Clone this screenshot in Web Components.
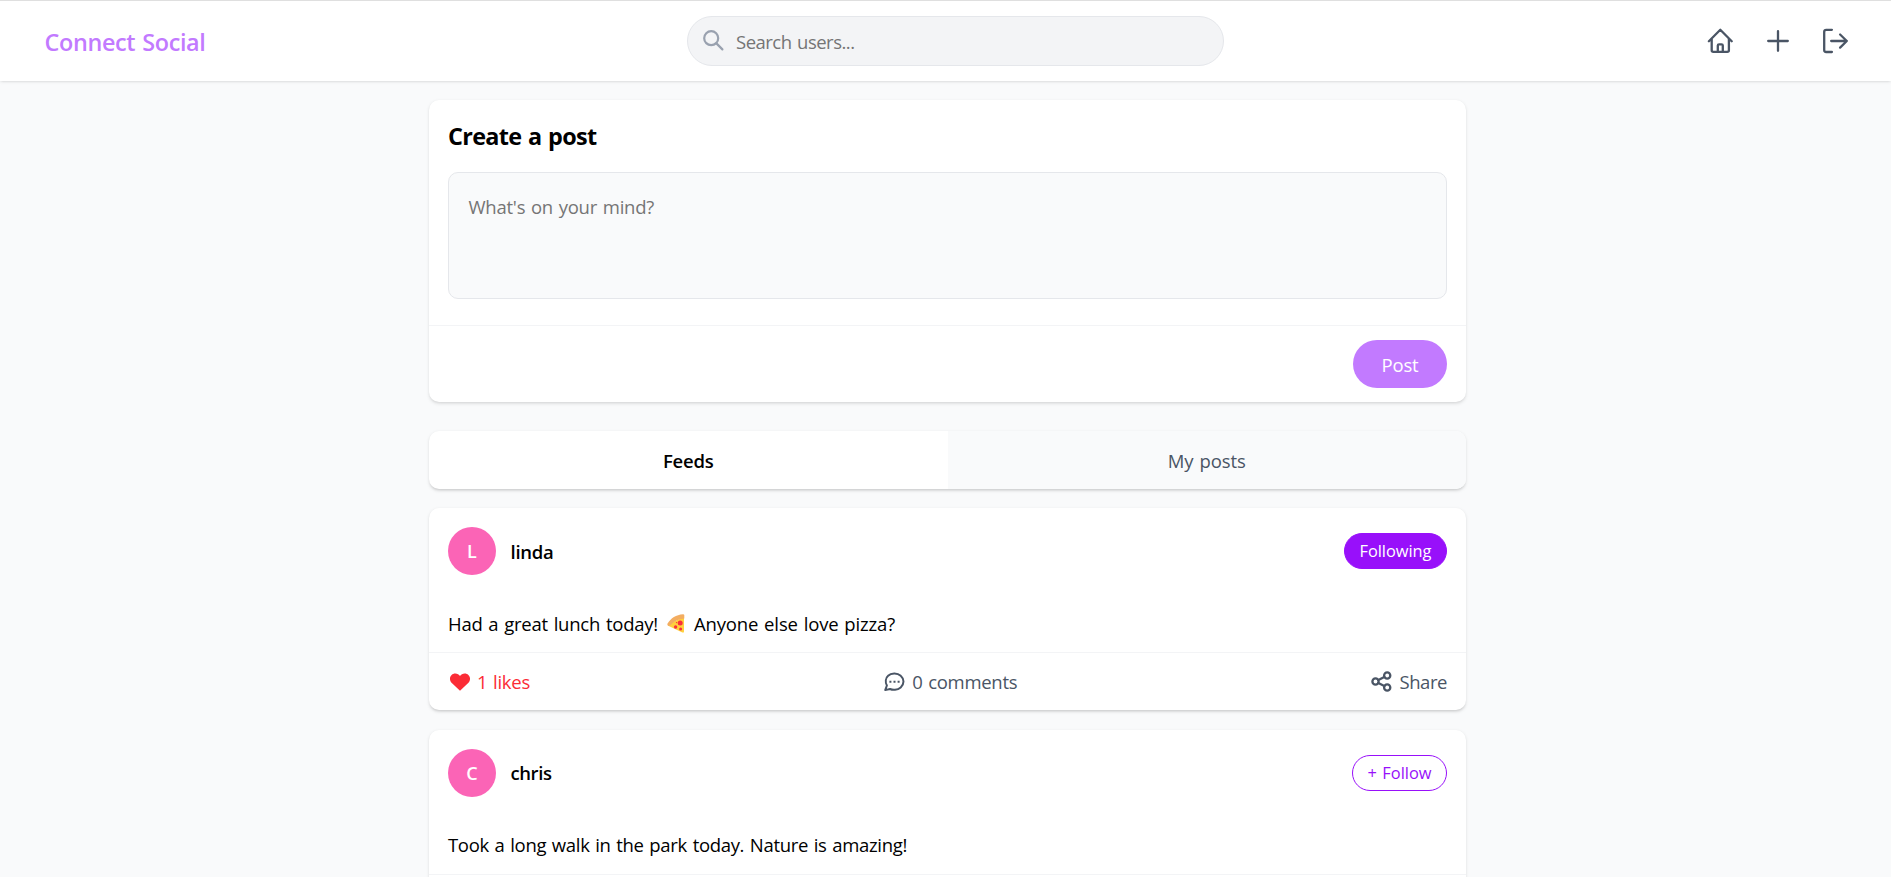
<!DOCTYPE html>
<html lang="en">
<head>
<meta charset="utf-8">
<title>Connect Social</title>
<style>
html,body{margin:0;height:877px;overflow:hidden}
body{background:#f9fafb;color:#000;font-family:"Open Sans","Noto Sans",sans-serif;font-size:18.5px;line-height:29px}
</style>
</head>
<body>
<social-app></social-app>
<script>
const define = (name, html, setup) => customElements.define(name, class extends HTMLElement {
  connectedCallback() {
    if (this.shadowRoot) return;
    const t = document.createElement('template');
    t.innerHTML = html;
    this.attachShadow({mode: 'open'}).append(t.content.cloneNode(true));
    if (setup) setup(this);
  }
});
const cardShadow = 'box-shadow:0 1.2px 3.6px rgba(0,0,0,.1),0 1.2px 2.4px -1.2px rgba(0,0,0,.1);';

const icons = {
  search: [21, 21, '<circle cx="8.2" cy="8.2" r="7"/><path d="M13.4 13.4 19.4 19.4"/>', 2.2],
  home: [26, 26, '<path d="M1.9 13.2 13.3 1.8 24.7 13.2M4.7 11V22.2Q4.7 23.8 6.3 23.8H20.3Q21.9 23.8 21.9 22.2V11M10.8 23.8V17.6Q10.8 16.3 12.1 16.3H14.5Q15.8 16.3 15.8 17.6V23.8"/>', 2.3],
  plus: [22, 22, '<path d="M11 1.2V20.8M1.2 11H20.8"/>', 2.3],
  logout: [26, 26, '<path d="M8.9 1.8H3.2Q1.2 1.8 1.2 3.8V22Q1.2 24 3.2 24H8.9M8.2 13H23.8M17.1 6.5 23.8 13 17.1 19.6"/>', 2.3],
  heart: [20, 18, '<path fill="currentColor" stroke="none" d="M10 17.8 1.8 10.1C-1.9 6.2.4.4 5.3.4 7.3.4 9 1.4 10 3 11 1.4 12.7.4 14.7.4 19.6.4 21.9 6.2 18.2 10.1Z"/>', 1],
  comment: [21, 20, '<path d="M2.9 13.5C1.1 10.2 1.5 6.2 4.1 3.8 7 .8 13.4.6 16.7 3.7 20.4 7 20.4 12.2 16.7 15.5 13.3 18.5 8.4 18.2 6 17L1.2 18.1Z"/><path stroke-width="2" stroke-linecap="butt" d="M5.4 9.8h2M9.5 9.8h2M13.6 9.8h2"/>', 2],
  share: [21, 21, '<circle cx="4.5" cy="10.5" r="3.1"/><circle cx="16.2" cy="4.5" r="3.1"/><circle cx="16.2" cy="16.5" r="3.1"/><path d="M7.4 9 13.3 5.9M7.4 12 13.3 15.1"/>', 2.3],
  pizza: [18, 19, '<g stroke="none"><path fill="#ffd03d" d="M2.6 9.4 17 3V17.4Q17 18.9 15.4 18.5L1.2 11.8Z"/><path fill="#f3ad61" d="M17.3 1V4.4C11.5 4.8 7 7 3.4 11.2 1.6 12.7 0 11.6.4 9.8 4 4 9 .8 16 .3Q17.3.3 17.3 1Z"/><g fill="#f92f3c"><circle cx="13.2" cy="9" r="2.5"/><circle cx="8.6" cy="13" r="1.7"/><circle cx="13.6" cy="14.9" r="1.5"/><circle cx="9.6" cy="8.6" r=".7"/></g></g>', 1]
};
define('ui-icon', '<style>:host{display:block;flex:none}svg{display:block}</style><svg fill="none" stroke="currentColor" stroke-linecap="round" stroke-linejoin="round"></svg>', el => {
  const [w, h, body, sw] = icons[el.getAttribute('name')];
  const s = el.shadowRoot.querySelector('svg');
  s.setAttribute('width', w); s.setAttribute('height', h);
  s.setAttribute('viewBox', `0 0 ${w} ${h}`); s.setAttribute('stroke-width', sw);
  s.innerHTML = body;
});

define('top-bar', `<style>
:host{display:grid;grid-template-columns:687px 537px 1fr;align-items:center;box-sizing:border-box;height:81px;border-top:1px solid #dfdfdf;background:#fff;${cardShadow}color:#4a5565}
.brand{padding:2px 0 0 44.5px;color:#c27aff;font-size:23.4px;font-weight:600}
.search{display:flex;box-sizing:border-box;height:50px;border:1px solid #e5e7eb;border-radius:25px;background:#f3f4f6;padding-left:15px;color:#757575}
.search ui-icon{margin-top:13px;color:#99a1af}
.search ui-label{margin:10px 0 0 12px}
nav{display:flex;align-items:center;justify-content:flex-end;padding-right:42.5px}
nav ui-icon+ui-icon{margin-left:34px}
</style>
<div class="brand"><ui-label width="161">Connect Social</ui-label></div>
<div class="search"><ui-icon name="search"></ui-icon><ui-label width="118.5">Search users...</ui-label></div>
<nav><ui-icon name="home"></ui-icon><ui-icon name="plus"></ui-icon><ui-icon name="logout"></ui-icon></nav>`);

define('post-composer', `<style>
:host{display:block;box-sizing:border-box;height:302px;background:#fff;border-radius:10px;${cardShadow}}
.top{box-sizing:border-box;height:225px;padding:22px 19px 0}
.title{height:50px;font-size:23.4px;font-weight:700}
.area{box-sizing:border-box;height:127px;border:1px solid #e5e7eb;border-radius:10px;background:#f9fafb;padding:19px 19.5px;color:#757575}
.bottom{display:flex;justify-content:flex-end;border-top:1px solid #f3f4f6;padding:14px 19px}
.post{box-sizing:border-box;width:94px;height:48px;border-radius:24px;background:#c27aff;color:#fff;text-align:center;padding-top:10px}
</style>
<div class="top"><div class="title"><ui-label width="148.5">Create a post</ui-label></div>
<div class="area"><ui-label width="185.5">What's on your mind?</ui-label></div></div>
<div class="bottom"><div class="post"><ui-label width="37">Post</ui-label></div></div>`);

define('feed-tabs', `<style>
:host{display:grid;grid-template-columns:1fr 1fr;height:58px;border-radius:10px;overflow:hidden;background:#fff;${cardShadow}text-align:center}
div{padding-top:15px}
.on{font-weight:600}
.off{background:#f9fafb;color:#4a5565}
</style>
<div class="on"><ui-label width="50.5">Feeds</ui-label></div><div class="off"><ui-label width="78">My posts</ui-label></div>`);

define('user-avatar', `<style>
:host{display:block;box-sizing:border-box;width:48px;height:48px;border-radius:50%;background:#fb64b6;color:#fff;text-align:center;font-weight:600;padding-top:10px;font-size:18px}
</style><slot></slot>`);

define('follow-button', `<style>
:host{display:block;box-sizing:border-box;height:36px;border-radius:18px;border:1px solid #9810fa;color:#9810fa;padding:2px 14.5px 0;font-size:16.4px;line-height:29px}
:host([active]){background:#9810fa;color:#fff}
</style><slot></slot>`);

define('feed-post', `<style>
:host{display:block;box-sizing:border-box;height:202px;background:#fff;border-radius:10px;${cardShadow}}
:host([preview]){height:147px;border-radius:10px 10px 0 0}
:host([preview]) .foot{padding:0;height:2px}
.head{display:flex;align-items:center;height:48px;padding:19px 19px 0}
.name{flex:1;padding:0 0 0 14.5px;font-weight:600}
:host([preview]) .name{padding-bottom:2px}
.text{display:flex;box-sizing:border-box;height:77px;padding:34px 19px 0}
.foot{display:flex;justify-content:space-between;border-top:1px solid #f3f4f6;padding:14px 19px 0;color:#4a5565}
.foot div{display:flex}
.like{color:#fb2c36}
.foot ui-label{margin-left:7px}
</style>
<div class="head"><slot name="avatar"></slot><div class="name"><slot name="name"></slot></div><slot name="action"></slot></div>
<div class="text"><slot></slot></div>
<div class="foot"></div>`, el => {
  if (el.hasAttribute('preview')) return;
  el.shadowRoot.querySelector('.foot').innerHTML = `<div class="like"><ui-icon name="heart" style="margin:6px 0 0 2px"></ui-icon><ui-label width="53">1 likes</ui-label></div>
<div><ui-icon name="comment" style="margin:5px 0 0 0"></ui-icon><ui-label width="105">0 comments</ui-label></div>
<div><ui-icon name="share" style="margin-top:4px"></ui-icon><ui-label width="47.5">Share</ui-label></div>`;
});

define('social-app', `<style>
:host{display:block}
main{box-sizing:border-box;width:1037px;margin:19px 0 0 429px}
feed-tabs{margin:29px 0 19px}
feed-post+feed-post{margin-top:20px}
</style>
<top-bar></top-bar>
<main>
<post-composer></post-composer>
<feed-tabs></feed-tabs>
<feed-post><user-avatar slot="avatar">L</user-avatar><ui-label slot="name" width="43">linda</ui-label><follow-button slot="action" active><ui-label width="72">Following</ui-label></follow-button><ui-label width="210">Had a great lunch today!</ui-label><ui-icon name="pizza" style="margin:5px 9.5px 0 8.5px"></ui-icon><ui-label width="201">Anyone else love pizza?</ui-label></feed-post>
<feed-post preview><user-avatar slot="avatar">C</user-avatar><ui-label slot="name" width="41">chris</ui-label><follow-button slot="action"><ui-label width="64">+ Follow</ui-label></follow-button><ui-label width="459" style="margin-top:-1px">Took a long walk in the park today. Nature is amazing!</ui-label></feed-post>
</main>`);

/* Single-line label whose tracking is set so that it takes its given width. */
define('ui-label', '<style>:host{display:inline-block;white-space:nowrap;flex:none;word-spacing:1.2px}</style><slot></slot>', el => {
  const natural = el.getBoundingClientRect().width;
  el.style.letterSpacing = (el.getAttribute('width') - natural) / el.textContent.length + 'px';
});
</script>
</body>
</html>
